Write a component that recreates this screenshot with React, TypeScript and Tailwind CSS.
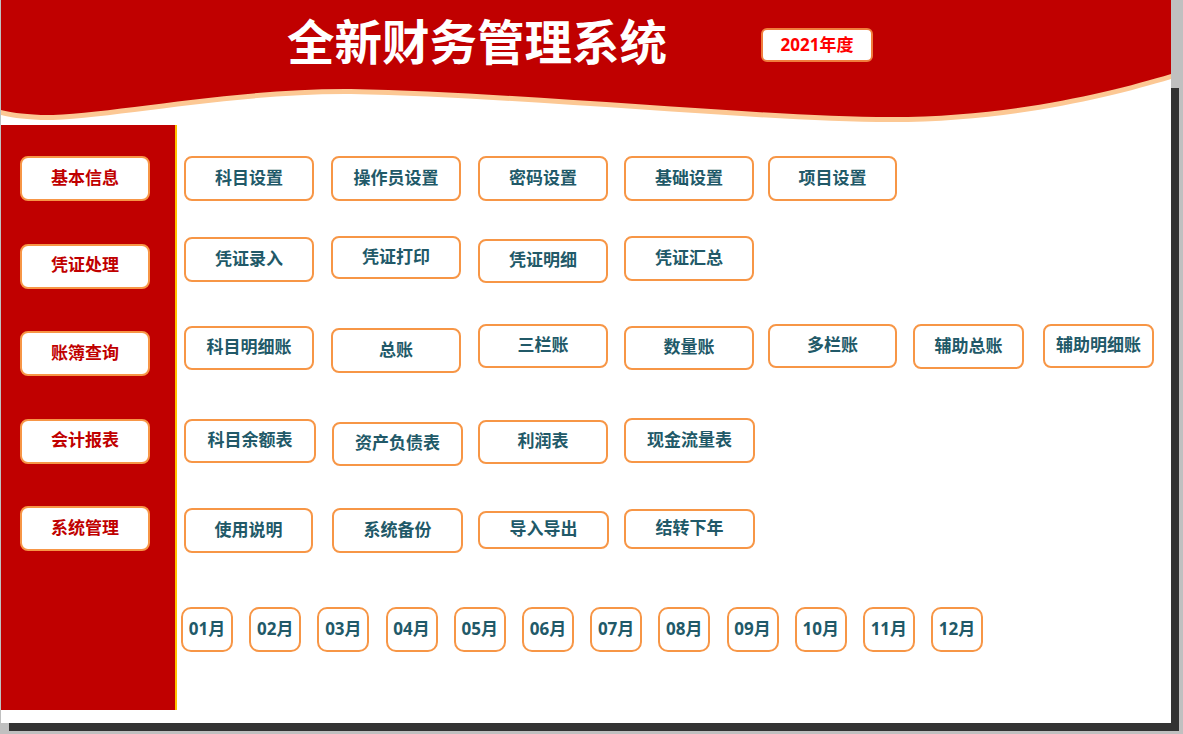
const sideItems = ["基本信息", "凭证处理", "账簿查询", "会计报表", "系统管理"];

const months = ["01月", "02月", "03月", "04月", "05月", "06月", "07月", "08月", "09月", "10月", "11月", "12月"];

type Item = { label: string; cls: string };

// each row: buttons sit in a 7-column grid, small offsets copied from the sheet
const rows: { rowCls: string; items: Item[] }[] = [
  {
    rowCls: "mt-[31px]",
    items: [
      { label: "科目设置", cls: "w-[130px] h-[45px]" },
      { label: "操作员设置", cls: "w-[130px] h-[45px]" },
      { label: "密码设置", cls: "w-[130px] h-[45px]" },
      { label: "基础设置", cls: "w-[130px] h-[45px]" },
      { label: "项目设置", cls: "w-[129px] h-[45px]" },
    ],
  },
  {
    rowCls: "mt-[30px]",
    items: [
      { label: "凭证录入", cls: "w-[130px] h-[45px] mt-[1px]" },
      { label: "凭证打印", cls: "w-[130px] h-[43px]" },
      { label: "凭证明细", cls: "w-[130px] h-[44px] mt-[3px]" },
      { label: "凭证汇总", cls: "w-[130px] h-[45px]" },
    ],
  },
  {
    rowCls: "mt-[38px]",
    items: [
      { label: "科目明细账", cls: "w-[130px] h-[44px] mt-[2px]" },
      { label: "总账", cls: "w-[130px] h-[45px] mt-[4px]" },
      { label: "三栏账", cls: "w-[130px] h-[44px]" },
      { label: "数量账", cls: "w-[130px] h-[44px] mt-[2px]" },
      { label: "多栏账", cls: "w-[129px] h-[44px]" },
      { label: "辅助总账", cls: "w-[111px] h-[45px]" },
      { label: "辅助明细账", cls: "w-[111px] h-[44px]" },
    ],
  },
  {
    rowCls: "mt-[44px]",
    items: [
      { label: "科目余额表", cls: "w-[132px] h-[44px] mt-[1px]" },
      { label: "资产负债表", cls: "w-[131px] h-[44px] mt-[4px] ml-[1px]" },
      { label: "利润表", cls: "w-[130px] h-[44px] mt-[2px]" },
      { label: "现金流量表", cls: "w-[131px] h-[45px]" },
    ],
  },
  {
    rowCls: "mt-[40px]",
    items: [
      { label: "使用说明", cls: "w-[129px] h-[45px]" },
      { label: "系统备份", cls: "w-[131px] h-[45px] ml-[1px]" },
      { label: "导入导出", cls: "w-[131px] h-[38px] mt-[3px]" },
      { label: "结转下年", cls: "w-[131px] h-[40px] mt-[1px]" },
    ],
  },
];

function Btn({ label, cls }: Item) {
  return (
    <div
      className={
        "flex items-center justify-center rounded-[8px] border-[2.5px] border-[#f79646] bg-white pb-[2px] text-[17px] font-bold text-[#215968] " +
        cls
      }
    >
      {label}
    </div>
  );
}

export default function App() {
  return (
    <div className="relative w-[1183px] h-[734px] overflow-hidden bg-[#c0c0c0] pl-[1px] font-['Open_Sans','Noto_Sans_CJK_SC',sans-serif]">
      <div className="relative w-[1170px] h-[723px] bg-white shadow-[8px_8px_0_#333333]">
        {/* header */}
        <div className="relative h-[125px]">
          <svg className="absolute left-0 top-0" width="1170" height="125" viewBox="0 0 1170 125">
            <path
              d="M0 0 H1170 V79 C1110 97 1010 122 890 122 C760 122 520 97 350 94 C230 93 100 121 40 120 C20 119 8 117 0 115 Z"
              fill="#fcc894"
            />
            <path
              d="M0 0 H1170 V74 C1110 92 1010 117 890 117 C760 117 520 92 350 89 C230 88 100 116 40 115 C20 114 8 112 0 110 Z"
              fill="#c00000"
            />
          </svg>
          <div className="relative flex items-start pl-[286px]">
            <div className="pt-[16px] text-[47.5px] font-bold leading-none text-white font-['Noto_Sans_CJK_SC',sans-serif]">
              全新财务管理系统
            </div>
            <div className="ml-[94px] mt-[28px] flex w-[112px] h-[34px] items-center justify-center rounded-[6px] border-2 border-[#f07d3c] bg-white pb-[1px] text-[17px] font-bold text-[#ff0000]">
              2021年度
            </div>
          </div>
        </div>

        {/* body */}
        <div className="flex">
          <div className="flex w-[176px] h-[585px] flex-col gap-[42.5px] border-r-2 border-[#ffc000] bg-[#c00000] pl-[19px] pt-[31px]">
            {sideItems.map((s) => (
              <div
                key={s}
                className="flex w-[130px] h-[45px] items-center justify-center rounded-[8px] border-[2.5px] border-[#f79646] bg-white pb-[2px] text-[17px] font-bold text-[#c00000]"
              >
                {s}
              </div>
            ))}
          </div>

          <div className="flex flex-1 flex-col">
            {rows.map((r, i) => (
              <div
                key={i}
                className={
                  "grid h-[50px] grid-cols-[147px_147px_146px_144px_145px_130px_111px] items-start pl-[7px] " + r.rowCls
                }
              >
                {r.items.map((it) => (
                  <Btn key={it.label} label={it.label} cls={it.cls} />
                ))}
              </div>
            ))}
            <div className="mt-[49px] flex gap-[16.2px] pl-[4px]">
              {months.map((m) => (
                <div
                  key={m}
                  className="flex w-[52px] h-[45px] items-center justify-center rounded-[10px] border-[2.5px] border-[#f79646] bg-white pb-[2px] text-[17px] font-bold text-[#215968]"
                >
                  {m}
                </div>
              ))}
            </div>
          </div>
        </div>
      </div>
      {/* page edge: the shadow does not run up beside the header */}
      <div className="absolute left-[1171px] top-0 w-[12px] h-[88px] bg-[#c0c0c0]" />
    </div>
  );
}
